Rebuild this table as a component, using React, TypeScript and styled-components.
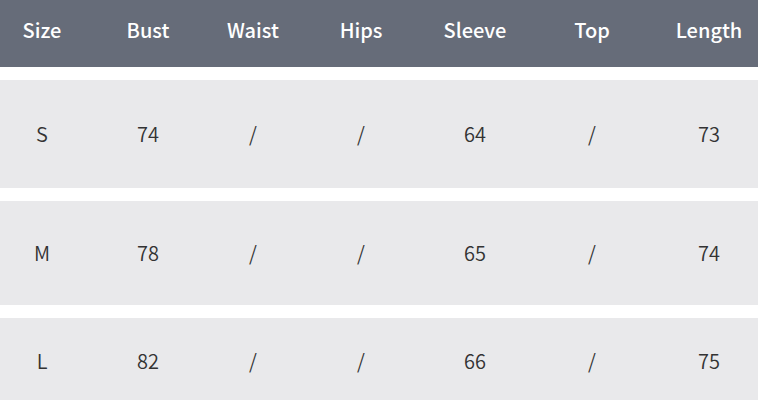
import styled, { createGlobalStyle } from "styled-components";

type Row = {
  size: string;
  values: string[];
};

const headers = ["Size", "Bust", "Waist", "Hips", "Sleeve", "Top", "Length"];

const rows: Row[] = [
  { size: "S", values: ["74", "/", "/", "64", "/", "73"] },
  { size: "M", values: ["78", "/", "/", "65", "/", "74"] },
  { size: "L", values: ["82", "/", "/", "66", "/", "75"] },
];

const rowHeights = [108, 104, 86];

const GlobalStyle = createGlobalStyle`
  body {
    margin: 0;
    background: #ffffff;
    font-family: "Noto Sans CJK SC", "Noto Sans", sans-serif;
    overflow: hidden;
  }
`;

const Table = styled.div`
  width: 758px;
  height: 400px;
  overflow: hidden;
  display: flex;
  flex-direction: column;
  gap: 13px;
`;

const Line = styled.div<{ $head?: boolean; $height: number }>`
  display: grid;
  grid-template-columns: 84px 128px 82px 134px 94px 140px 94px;
  width: 758px;
  height: ${(p) => p.$height}px;
  flex-shrink: 0;
  align-items: center;
  background-color: ${(p) => (p.$head ? "#666c79" : "#e9e9eb")};
  color: ${(p) => (p.$head ? "#ffffff" : "#333333")};
  font-size: 20px;
  font-weight: ${(p) => (p.$head ? 500 : 350)};
  padding-bottom: ${(p) => (p.$head ? 7 : 0)}px;
  box-sizing: border-box;
`;

const Cell = styled.div`
  text-align: center;
  white-space: nowrap;
  line-height: 1;
`;

export default function App() {
  return (
    <>
      <GlobalStyle />
      <Table>
        <Line $head $height={67}>
          {headers.map((h) => (
            <Cell key={h}>{h}</Cell>
          ))}
        </Line>
        {rows.map((r, i) => (
          <Line key={r.size} $height={rowHeights[i]}>
            <Cell>{r.size}</Cell>
            {r.values.map((v, j) => (
              <Cell key={j}>{v}</Cell>
            ))}
          </Line>
        ))}
      </Table>
    </>
  );
}
